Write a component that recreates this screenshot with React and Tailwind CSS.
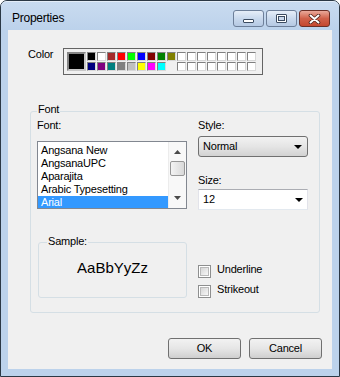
import React from 'react';

const ROW1 = [
  'bg-[#000000]', 'bg-[#ffffff]', 'bg-[#a52a2a]', 'bg-[#ff0000]', 'bg-[#00ff00]', 'bg-[#0000ff]',
  'bg-[#800000]', 'bg-[#008000]', 'bg-[#808000]',
  'bg-white', 'bg-white', 'bg-white', 'bg-white', 'bg-white', 'bg-white', 'bg-white', 'bg-white',
];

const ROW2 = [
  'bg-[#000080]', 'bg-[#800080]', 'bg-[#008080]', 'bg-[#808080]', 'bg-[#c0c0c0]', 'bg-[#ffff00]',
  'bg-[#ff00ff]', 'bg-[#00ffff]', null,
  'bg-white', 'bg-white', 'bg-white', 'bg-white', 'bg-white', 'bg-white', 'bg-white', 'bg-white',
];

const FONTS = ['Angsana New', 'AngsanaUPC', 'Aparajita', 'Arabic Typesetting', 'Arial'];

function Swatch({ color }) {
  if (!color) return <div className="h-[9px] w-[9px]" />;
  return (
    <div
      className={`h-[9px] w-[9px] border border-[#808080] border-r-[#d8d8d8] border-b-[#d8d8d8] ${color}`}
    />
  );
}

function CaptionButton({ children, close }) {
  return (
    <div
      className={`flex h-[17px] w-[31px] items-center justify-center rounded-[3px] border ${
        close
          ? 'border-[#6b2f26] bg-linear-to-b from-[#e9a99a] via-[#d0614a] to-[#c4472f]'
          : 'border-[#6d7f99] bg-linear-to-b from-[#e6eef8] via-[#c9d9ed] to-[#b5c9e3]'
      }`}
    >
      {children}
    </div>
  );
}

function Arrow({ down }) {
  return (
    <svg width="7" height="4" viewBox="0 0 7 4">
      <path d={down ? 'M0 0H7L3.5 4Z' : 'M0 4H7L3.5 0Z'} fill="#4a4a4a" />
    </svg>
  );
}

function ComboArrow() {
  return (
    <svg width="8" height="4" viewBox="0 0 8 4">
      <path d="M0 0H8L4 4Z" fill="#000" />
    </svg>
  );
}

function Checkbox({ label }) {
  return (
    <div className="flex h-[13px] items-start">
      <div className="h-[13px] w-[13px] border border-[#8e8f8f] bg-white p-[1px]">
        <div className="h-full w-full border border-[#b9b9b9] bg-linear-to-br from-[#d6d6d6] to-[#f8f8f8]" />
      </div>
      <span className="ml-[6px] -mt-[2px] leading-[13px]">{label}</span>
    </div>
  );
}

export default function App() {
  return (
    <div className="h-[377px] w-[340px] bg-white font-['Liberation_Sans',Arial,sans-serif] text-[11px] leading-[13px] tracking-[-0.2px] text-black">
      <div className="flex h-full flex-col rounded-t-[7px] border border-[#2b3845] bg-[#bcd2eb]">
        {/* title bar */}
        <div className="flex h-[29px] items-start rounded-t-[6px] border-t border-[#e4edf8] bg-linear-to-b from-[#c9dbf0] to-[#bcd2eb]">
          <span className="ml-[11px] mt-[9px] text-[12px] leading-[14px] tracking-[-0.25px]">Properties</span>
          <div className="ml-auto mr-[9px] mt-[8px] flex gap-[2px]">
            <CaptionButton>
              <div className="mt-[5px] h-[4px] w-[11px] rounded-[1px] border border-[#3b4b60] bg-white" />
            </CaptionButton>
            <CaptionButton>
              <div className="h-[9px] w-[11px] rounded-[1px] border border-[#3b4b60] bg-white p-[1px]">
                <div className="h-full w-full border border-[#3b4b60] bg-[#c9d8ec]" />
              </div>
            </CaptionButton>
            <CaptionButton close>
              <svg width="13" height="10" viewBox="0 0 13 10">
                <path
                  d="M2.5 1.5L10.5 8.5M10.5 1.5L2.5 8.5"
                  stroke="#4a2018"
                  strokeWidth="3.6"
                  strokeLinecap="round"
                />
                <path
                  d="M2.5 1.5L10.5 8.5M10.5 1.5L2.5 8.5"
                  stroke="#ffffff"
                  strokeWidth="2"
                  strokeLinecap="round"
                />
              </svg>
            </CaptionButton>
          </div>
        </div>

        {/* client area */}
        <div className="mx-[7px] flex flex-1 flex-col bg-[#f0f0f0]">
          <div className="flex items-start pt-[18px] pl-[20px]">
            <span className="w-[35px]">Color</span>
            <div className="flex gap-[1px] border border-[#646464] pt-[3px] pl-[3px] pr-[6px] pb-[3px]">
              <div className="h-[19px] w-[19px] border-2 border-[#858585] border-r-[#c8c8c8] border-b-[#c8c8c8] bg-black" />
              <div className="grid grid-cols-[repeat(17,9px)] gap-[1px]">
                {ROW1.map((c, i) => (
                  <Swatch key={`a${i}`} color={c} />
                ))}
                {ROW2.map((c, i) => (
                  <Swatch key={`b${i}`} color={c} />
                ))}
              </div>
            </div>
          </div>

          {/* Font group */}
          <div className="ml-[22px] mt-[36px] w-[290px] rounded-[3px] border border-[#d5dfe5] pb-[14px]">
            <div className="ml-[6px] -mt-[9px] w-fit bg-[#f0f0f0] px-[1px]">Font</div>
            <div className="mt-[3px] flex pl-[6px]">
              <div className="w-[150px]">
                <div>Font:</div>
                <div className="mt-[9px] flex h-[68px] border border-[#828790] bg-white">
                  <div className="flex-1 overflow-hidden pt-[2px]">
                    {FONTS.map((f) => (
                      <div
                        key={f}
                        className={`h-[13px] pl-[3px] leading-[13px] ${
                          f === 'Arial' ? 'bg-[#3399ff] text-white' : ''
                        }`}
                      >
                        {f}
                      </div>
                    ))}
                  </div>
                  <div className="flex w-[18px] flex-col items-center border-l border-[#ececec] bg-[#f8f8f8]">
                    <div className="flex h-[18px] items-center justify-center pt-[1px]">
                      <Arrow />
                    </div>
                    <div className="mt-[1px] h-[15px] w-[15px] rounded-[2px] border border-[#979797] bg-linear-to-r from-[#f4f4f4] to-[#d9d9d9]" />
                    <div className="mt-auto flex h-[18px] items-center justify-center pb-[3px]">
                      <Arrow down />
                    </div>
                  </div>
                </div>
              </div>

              <div className="ml-[11px] w-[110px]">
                <div>Style:</div>
                <div className="mt-[4px] flex h-[21px] items-center rounded-[3px] border border-[#707070] bg-linear-to-b from-[#f2f2f2] via-[#e5e5e5] to-[#d2d2d2] pl-[4px] pr-[5px]">
                  <span className="flex-1">Normal</span>
                  <ComboArrow />
                </div>
                <div className="mt-[17px]">Size:</div>
                <div className="mt-[2px] flex h-[21px] items-center border border-[#e2e3ea] border-t-[#abadb3] border-b-[#e3e9ef] bg-white pl-[4px] pr-[4px]">
                  <span className="flex-1">12</span>
                  <ComboArrow />
                </div>
              </div>
            </div>

            <div className="flex items-end pl-[7px]">
              <div className="mt-[32px] h-[56px] w-[149px] rounded-[3px] border border-[#d5dfe5]">
                <div className="ml-[8px] -mt-[8px] w-fit bg-[#f0f0f0] px-[1px]">Sample:</div>
                <div className="mt-[11px] text-center text-[15px] leading-[18px] tracking-normal">AaBbYyZz</div>
              </div>
              <div className="ml-[11px] flex flex-col gap-[7px]">
                <Checkbox label="Underline" />
                <Checkbox label="Strikeout" />
              </div>
            </div>
          </div>

          <div className="mt-[25px] flex justify-end gap-[8px] pr-[10px]">
            <button className="flex h-[21px] w-[73px] items-center justify-center rounded-[3px] border border-[#707070] bg-linear-to-b from-[#f2f2f2] via-[#e6e6e6] to-[#cfcfcf]">
              OK
            </button>
            <button className="flex h-[21px] w-[73px] items-center justify-center rounded-[3px] border border-[#707070] bg-linear-to-b from-[#f2f2f2] via-[#e6e6e6] to-[#cfcfcf]">
              Cancel
            </button>
          </div>
        </div>
        <div className="h-[7px]" />
      </div>
    </div>
  );
}
